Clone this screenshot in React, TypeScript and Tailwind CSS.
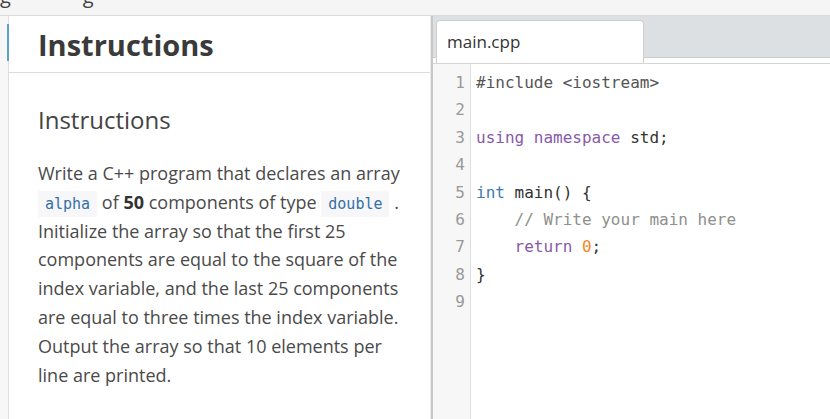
import React from "react";

const codeLines: React.ReactNode[] = [
  <span className="text-[#555]">#include &lt;iostream&gt;</span>,
  "",
  <>
    <span className="text-[#8959a8]">using namespace</span> std;
  </>,
  "",
  <>
    <span className="text-[#3e7cb1]">int</span> main() {"{"}
  </>,
  <span className="text-[#8e908c]">{"    // Write your main here"}</span>,
  <>
    {"    "}
    <span className="text-[#8959a8]">return</span>{" "}
    <span className="text-[#f5871f]">0</span>;
  </>,
  "}",
  "",
];

function InlineCode({ children }: { children: React.ReactNode }) {
  return (
    <code className="bg-[#f7f7f9] px-[7px] py-[4px] text-[15px] leading-[0] text-[#3370a6] font-['DejaVu_Sans_Mono',monospace]">
      {children}
    </code>
  );
}

export default function App() {
  return (
    <div className="w-[830px] h-[419px] overflow-hidden bg-white flex flex-col font-['Open_Sans',sans-serif]">
      {/* cut-off strip at the top */}
      <div className="h-[16px] shrink-0 bg-[#f5f5f5] border-b border-[#dcdcdc] overflow-hidden">
        <div className="-mt-[16px] text-[20px] leading-[24px] text-[#444]">
          <span>g</span>
          <span className="ml-[72px]">g</span>
        </div>
      </div>

      <div className="flex flex-1 min-h-0">
        {/* left rail */}
        <div className="relative w-[9px] shrink-0 bg-[#f7f7f7] border-r border-[#dedede]">
          <div className="absolute top-[8px] right-[-1px] w-[2px] h-[37px] bg-[#5aa2cc]" />
        </div>

        {/* instructions panel */}
        <div className="w-[422px] shrink-0 flex flex-col border-r border-[#ececec]">
          <div className="h-[57px] shrink-0 border-b border-[#dcdcdc] px-[29px] flex items-center">
            <h1 className="text-[29px] font-bold text-[#3a3a3a] leading-none">Instructions</h1>
          </div>
          <div className="px-[29px] pt-[30px]">
            <h2 className="text-[24px] leading-[34px] text-[#444]">Instructions</h2>
            <p className="mt-[22px] text-[18px] leading-[28.8px] text-[#4a4a4a]">
              Write a C++ program that declares an array <InlineCode>alpha</InlineCode> of{" "}
              <b className="font-bold text-[#333]">50</b> components of type{" "}
              <InlineCode>double</InlineCode> . Initialize the array so that the first 25
              components are equal to the square of the index variable, and the last 25
              components are equal to three times the index variable. Output the array so that
              10 elements per line are printed.
            </p>
          </div>
        </div>

        {/* divider */}
        <div className="w-[2px] shrink-0 bg-[#c8c8c8]" />

        {/* editor */}
        <div className="flex-1 min-w-0 flex flex-col">
          <div className="h-[48px] shrink-0 border-b border-[#d6d6d6] pl-[3px] pt-[4px] flex bg-[linear-gradient(to_bottom,#dde0e3_41px,#c9ccd0_41px,#c9ccd0_42px,#ffffff_42px)]">
            <div className="w-[208px] h-[43px] bg-white border border-b-0 border-[#cfcfcf] rounded-t-[4px] px-[10px] flex items-center text-[17px] text-[#333]">
              main.cpp
            </div>
          </div>
          <div className="flex-1 flex min-h-0">
            <div className="w-[38px] shrink-0 bg-[#f7f7f7] border-r border-[#dcdcdc] pt-[5px] pr-[5px] text-right text-[16px] leading-[27.4px] text-[#999] font-['DejaVu_Sans_Mono',monospace]">
              {codeLines.map((_, i) => (
                <div key={i}>{i + 1}</div>
              ))}
            </div>
            <div className="flex-1 pt-[5px] pl-[5px] text-[16px] leading-[27.4px] text-[#333] font-['DejaVu_Sans_Mono',monospace] whitespace-pre">
              {codeLines.map((line, i) => (
                <div key={i} className="h-[27.4px]">
                  {line}
                </div>
              ))}
            </div>
          </div>
        </div>
      </div>
    </div>
  );
}
